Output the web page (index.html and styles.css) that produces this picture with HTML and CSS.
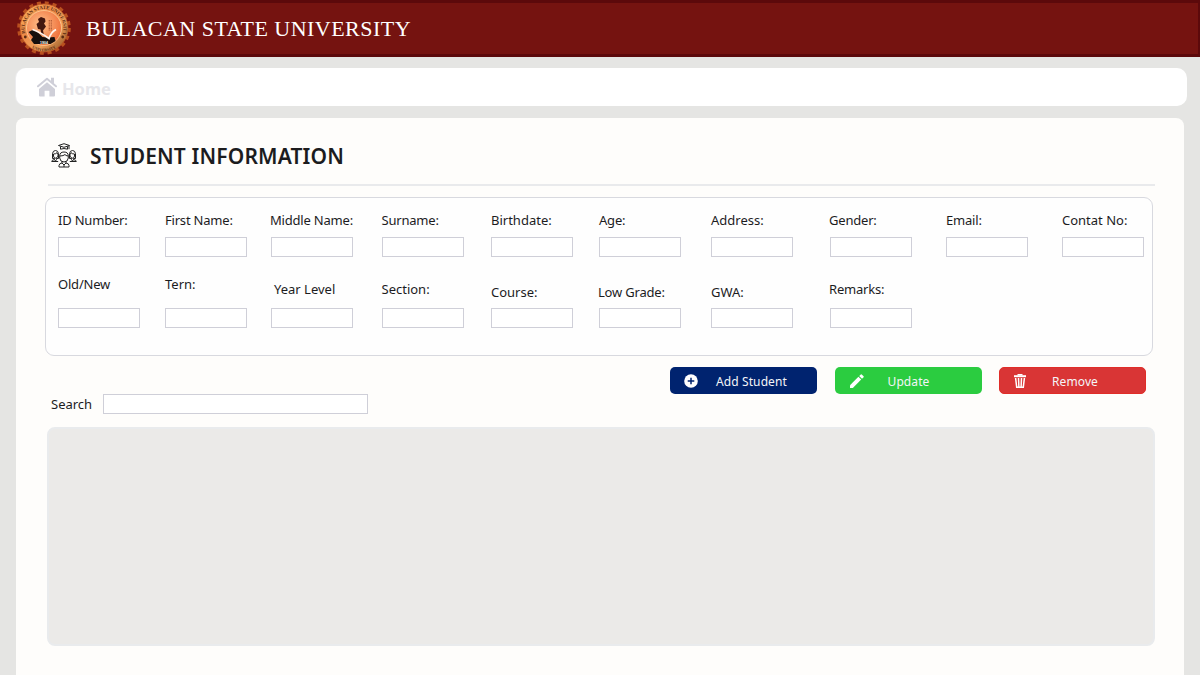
FILE: index.html
```html
<!DOCTYPE html>
<html lang="en">
<head>
<meta charset="utf-8">
<title>Bulacan State University</title>
<link rel="stylesheet" href="styles.css">
</head>
<body>
<header class="topbar">
  <svg class="seal" viewBox="0 0 54 54">
    <defs>
      <linearGradient id="gold" x1="0" y1="0" x2="1" y2="1"><stop offset="0" stop-color="#ffc067"/><stop offset=".35" stop-color="#ee8a48"/><stop offset=".65" stop-color="#f0a35c"/><stop offset="1" stop-color="#7e4216"/></linearGradient>
      <radialGradient id="core" cx=".4" cy=".4" r=".65"><stop offset="0" stop-color="#ffc08a"/><stop offset="1" stop-color="#ee6e38"/></radialGradient>
      <path id="arcTop" d="M9.600 36A19.400 19.400 0 1 1 44.400 36"/>
      <path id="arcBottom" d="M10 42.300A22.200 22.200 0 0 0 44 42.300"/>
    </defs>
    <circle cx="27" cy="27" r="25" fill="none" stroke="#b9501f" stroke-width="3.6" stroke-dasharray="4 3.854"/>
    <circle cx="27" cy="27" r="24" fill="url(#gold)" stroke="#bd5722" stroke-width=".8"/>
    <circle cx="27" cy="27" r="17.500" fill="url(#core)" stroke="#ffd09a" stroke-width=".8"/>
    <text class="seal-text"><textPath href="#arcTop" startOffset="4" textLength="72">BULACAN STATE UNIVERSITY</textPath></text>
    <text class="seal-text seal-text-small"><textPath href="#arcBottom" startOffset="50%" text-anchor="middle">UNIVERSITY</textPath></text>
    <circle cx="8.300" cy="36" r="1.400" fill="#5a2a12"/><circle cx="45.700" cy="36" r="1.400" fill="#5a2a12"/>
    <path d="M11.500 31l5-2.500 4 2.500 5 5 5 .5 7-.5 1 4-5 3H17l-3-4 2-3z" fill="#17100d"/>
    <path d="M21 28l-1.500-5 2.500-2-1-3 3-2 4 1.500.5 3-1.500 2 2 3-3 4 1 5-2.500-1-1-5z" fill="#42170f"/>
    <path d="M32.300 19v11M34.300 19v11" stroke="#b05a35" stroke-width="1.200" stroke-dasharray="1 .6"/>
    <path d="M15.500 28.500Q23 31 32 37.500Q34 31 39 28.500" fill="none" stroke="#fff3ec" stroke-width="1.800"/>
    <text class="seal-year" x="27" y="43" text-anchor="middle">1904</text>
  </svg>
  <h1 class="brand">BULACAN STATE UNIVERSITY</h1>
</header>

<nav class="nav">
  <svg class="nav-icon" viewBox="0 0 20 20">
    <path d="M10 5.300 18 12V18.500Q18 19.500 17 19.500H12.400V13.800H7.600V19.500H3Q2 19.500 2 18.500V12Z" fill="#cfcfd8"/>
    <path d="M1 9.300 10 1.800 19 9.300" fill="none" stroke="#cfcfd8" stroke-width="2" stroke-linecap="round" stroke-linejoin="round"/>
    <path d="M14 .8h3v6.500l-3-2.600z" fill="#cfcfd8"/>
  </svg>
  <span class="nav-label">Home</span>
</nav>

<main class="panel">
  <div class="heading">
    <svg class="heading-icon" viewBox="0 0 26 26" fill="none" stroke="#222" stroke-width="1" stroke-linejoin="round">
      <path d="M7.500 2.500 13 .7l5.500 1.800L13 4.300z"/><path d="M9.500 3.500v2.700q3.500-1.400 7 0V3.500M18 2.800v3.400"/>
      <path d="M8.700 13q0-4 4.300-4t4.300 4v2q-.5 4-4.300 4t-4.300-4zM9 13q3.500 0 5-1.500.5 1.200 3 1.500"/>
      <path d="M11 18.500v1.500l2 2 2-2v-1.500M11 20q-3 .5-3 2.500V24h10v-1.500q0-2-3-2.500M13 22v2"/>
      <path d="M1.500 15.500v-5Q2 7.500 4.500 7.500t3 3v5M2.500 11q2.500 0 3.500-1.300l1 1.300v2q-.7 2.200-2.500 2.200T2.500 13zM1.500 15.500H3M6 15.500h1.500M3.500 15.300v1.400L4.500 18l1-1.300v-1.400M3.500 16.600Q.7 17 .7 18.500h6.500"/>
      <path d="M24.500 15.500v-5q-.5-3-3-3t-3 3v5M23.500 11q-2.500 0-3.500-1.300L19 11v2q.7 2.200 2.500 2.200t2-2.200zM24.500 15.500H23M20 15.500h-1.500M22.500 15.300v1.400l-1 1.300-1-1.300v-1.400M22.500 16.600q2.800.4 2.800 1.900h-6.500"/>
    </svg>
    <h2 class="heading-title">STUDENT INFORMATION</h2>
  </div>

  <form class="card">
    <label class="field"><span class="label label-tight">ID Number:</span><input class="input"></label>
    <label class="field"><span class="label label-tight">First Name:</span><input class="input"></label>
    <label class="field"><span class="label label-tight label-outdent">Middle Name:</span><input class="input"></label>
    <label class="field"><span class="label label-tight">Surname:</span><input class="input"></label>
    <label class="field"><span class="label">Birthdate:</span><input class="input"></label>
    <label class="field"><span class="label label-tight">Age:</span><input class="input"></label>
    <label class="field"><span class="label">Address:</span><input class="input"></label>
    <label class="field"><span class="label label-tight label-outdent">Gender:</span><input class="input"></label>
    <label class="field"><span class="label label-tight">Email:</span><input class="input"></label>
    <label class="field"><span class="label">Contat No:</span><input class="input"></label>
    <label class="field"><span class="label label-tight">Old/New</span><input class="input"></label>
    <label class="field"><span class="label">Tern:</span><input class="input"></label>
    <label class="field"><span class="label label-mid label-indent">Year Level</span><input class="input"></label>
    <label class="field"><span class="label label-mid">Section:</span><input class="input"></label>
    <label class="field"><span class="label label-low">Course:</span><input class="input"></label>
    <label class="field"><span class="label label-low label-tight label-outdent">Low Grade:</span><input class="input"></label>
    <label class="field"><span class="label label-low">GWA:</span><input class="input"></label>
    <label class="field"><span class="label label-mid label-tight label-outdent">Remarks:</span><input class="input"></label>
  </form>

  <div class="toolbar">
    <label class="search"><span class="label search-label">Search</span><input class="input search-input"></label>
    <div class="actions">
      <button class="btn btn-add"><svg class="btn-icon" viewBox="0 0 14 14"><circle cx="7" cy="7" r="6.800" fill="#fff"/><path d="M7 3.700v6.600M3.700 7h6.600" stroke="#00236f" stroke-width="1.500"/></svg><span class="btn-text">Add Student</span></button>
      <button class="btn btn-update"><svg class="btn-icon" viewBox="0 0 14 14" fill="#fff"><path d="M0 11.200 8.400 2.800 11.200 5.600 2.800 14H0z"/><path d="M9.200 2 10.800.4Q11.200 0 11.700.4L13.600 2.300Q14 2.800 13.600 3.200L12 4.800z"/></svg><span class="btn-text">Update</span></button>
      <button class="btn btn-remove"><svg class="btn-icon" viewBox="0 0 14 14" fill="none" stroke="#fff"><path d="M1 2.200h12" stroke-width="2"/><path d="M4.500.7h5" stroke-width="1.400"/><path d="M2.600 4 3.700 13.200H10.300L11.400 4M5.500 4 5.900 13M8.500 4 8.100 13" stroke-width="1.500"/></svg><span class="btn-text">Remove</span></button>
    </div>
  </div>

  <section class="results"></section>
</main>
</body>
</html>
```

FILE: styles.css
```css
* { box-sizing: border-box; }

body {
  margin: 0;
  height: 675px;
  overflow: hidden;
  display: flex;
  flex-direction: column;
  background: #e5e5e3;
  font-family: "Noto Sans", sans-serif;
  color: #1c1c1e;
}

.topbar {
  flex: none;
  height: 57px;
  display: flex;
  align-items: center;
  gap: 15px;
  padding-left: 17px;
  background: #751310;
  border: solid #5c090b;
  border-width: 3px 2px 3px 0;
}

.seal { width: 54px; height: 54px; flex: none; margin-bottom: 2px; }
.seal-text { font: bold 5px "Liberation Serif", serif; fill: #5a2a12; }
.seal-text-small { font-size: 4px; }
.seal-year { font: bold 3.5px "Liberation Sans", sans-serif; fill: #fff; }

.brand {
  margin: 0;
  font: 400 22px/30px "Liberation Serif", serif;
  letter-spacing: 0.48px;
  color: #fff;
  white-space: nowrap;
}

.nav {
  flex: none;
  height: 38px;
  margin: 11px 13px 0 16px;
  padding-left: 21px;
  display: flex;
  align-items: center;
  gap: 5px;
  background: #fff;
  border-radius: 10px;
  box-shadow: -1px 0 0 #ececee;
}

.nav-icon { width: 20px; height: 20px; }
.nav-label { font-size: 16.5px; font-weight: 700; line-height: 24px; color: #e7e7eb; padding-top: 3px; }

.panel {
  flex: 1;
  margin: 12px 16px 0 16px;
  padding: 0 29px;
  background: #fefdfb;
  border-radius: 8px 8px 0 0;
}

.heading {
  height: 68px;
  margin: 0 0 0 3px;
  padding: 9px 0 0 3px;
  display: flex;
  align-items: center;
  gap: 13px;
  border-bottom: 2px solid #e9eaec;
}

.heading-icon { width: 26px; height: 26px; }
.heading-title { margin: 0; font-size: 21px; line-height: 28px; font-weight: 600; letter-spacing: 0.15px; white-space: nowrap; }

.card {
  height: 159px;
  width: 1108px;
  margin-top: 11px;
  padding: 13px 0 0 12px;
  display: grid;
  grid-template-columns: 107px 106px 110.5px 109.5px 108px 112px 119px 116px 116px 82px;
  grid-template-rows: 46px 53px;
  row-gap: 18px;
  background: #fefefe;
  border: 1px solid #d8d9df;
  border-radius: 9px;
}

.field { width: 82px; display: flex; flex-direction: column; }
.label { font-size: 13px; line-height: 18px; white-space: nowrap; }
.label-tight { letter-spacing: -0.2px; }
.label-mid { margin-top: 5px; }
.label-low { margin-top: 8px; }
.label-indent { margin-left: 3px; }
.label-outdent { margin-left: -1px; }

.input {
  width: 82px;
  height: 20px;
  margin-top: auto;
  padding: 0 4px;
  border: 1px solid #cfcfd8;
  border-radius: 0;
  background: #fff;
}

.toolbar { height: 71px; display: flex; justify-content: space-between; padding: 11px 9px 0 6px; }
.search { display: flex; align-items: center; height: 20px; margin-top: 27px; }
.search-label { width: 52px; }
.search-input { width: 265px; margin: 0; }
.actions { display: flex; gap: 17.5px; }

.btn {
  width: 147px;
  height: 27px;
  padding: 0 0 0 14px;
  display: flex;
  align-items: center;
  border: 0;
  border-radius: 5px;
  color: #f4f5f8;
  font: 400 12px "Noto Sans", sans-serif;
  letter-spacing: 0.1px;
}

.btn-add { background: #00236f; }
.btn-update { background: #2bcc40; }
.btn-remove { background: #d93535; border: 1px solid #e02d28; padding-left: 13px; }
.btn-icon { width: 14px; height: 14px; flex: none; }
.btn-update .btn-icon { margin-left: 1px; }
.btn-text { flex: 1; text-align: center; padding: 1px 12px 0 0; white-space: nowrap; }
.btn-update .btn-text { padding-right: 28px; }
.btn-remove .btn-text { padding-right: 22px; }

.results {
  height: 219px;
  width: 1108px;
  margin-left: 2px;
  background: #ebeae8;
  border: 2px solid #e9ebed;
  border-radius: 8px;
}
```
